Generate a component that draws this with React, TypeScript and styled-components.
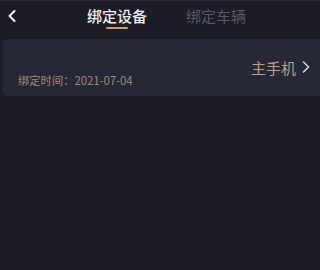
import React from "react";
import styled, { createGlobalStyle } from "styled-components";

const Global = createGlobalStyle`
  html, body { margin: 0; padding: 0; background: #1b1c26; }
  body { font-family: "Noto Sans CJK SC", "Noto Sans", sans-serif; }
`;

const Page = styled.div`
  width: 320px;
  height: 270px;
  background: #1b1c26;
  border-top: 1px solid #2a2b35;
  box-sizing: border-box;
  overflow: hidden;
`;

const Header = styled.div`
  display: flex;
  align-items: flex-start;
  height: 38px;
`;

const BackButton = styled.div`
  width: 87px;
  padding: 9px 0 0 8px;
  box-sizing: border-box;
  display: flex;
`;

const Tabs = styled.div`
  display: flex;
  gap: 39px;
`;

const Tab = styled.div<{ $active?: boolean }>`
  display: flex;
  flex-direction: column;
  align-items: center;
  padding-top: 5px;
  font-size: 15px;
  line-height: 19px;
  font-weight: ${(p) => (p.$active ? 500 : 400)};
  color: ${(p) => (p.$active ? "#eeeeef" : "#575965")};
`;

const Underline = styled.div<{ $active?: boolean }>`
  width: 22px;
  height: 2px;
  margin-top: 2px;
  border-radius: 1px;
  background: ${(p) => (p.$active ? "#c9a06c" : "transparent")};
`;

const Card = styled.div`
  margin-left: 3px;
  height: 57px;
  background: #262837;
  border-radius: 5px 0 0 5px;
  display: flex;
  justify-content: space-between;
  padding: 0 10px 0 15px;
`;

const DateText = styled.div`
  align-self: flex-end;
  padding-bottom: 9px;
  font-size: 11.3px;
  line-height: 14px;
  color: #9e8a6e;
`;

const Role = styled.div`
  align-self: center;
  display: flex;
  align-items: center;
  gap: 6px;
  font-size: 15px;
  line-height: 19px;
  color: #bf9f7b;
  margin-top: -1px;
`;

const Chevron = ({ dir, color, w }: { dir: "left" | "right"; color: string; w: number }) => (
  <svg width="8" height="12" viewBox="0 0 8 12" fill="none">
    <path
      d={dir === "left" ? "M6.5 1 L1.5 6 L6.5 11" : "M1.5 1 L6.5 6 L1.5 11"}
      stroke={color}
      strokeWidth={w}
      strokeLinecap="round"
      strokeLinejoin="round"
    />
  </svg>
);

export default function App() {
  return (
    <Page>
      <Global />
      <Header>
        <BackButton>
          <Chevron dir="left" color="#f2f2f2" w={2} />
        </BackButton>
        <Tabs>
          <Tab $active>
            绑定设备
            <Underline $active />
          </Tab>
          <Tab>
            绑定车辆
            <Underline />
          </Tab>
        </Tabs>
      </Header>
      <Card>
        <DateText>绑定时间：2021-07-04</DateText>
        <Role>
          主手机
          <Chevron dir="right" color="#d4d4d8" w={1.6} />
        </Role>
      </Card>
    </Page>
  );
}
